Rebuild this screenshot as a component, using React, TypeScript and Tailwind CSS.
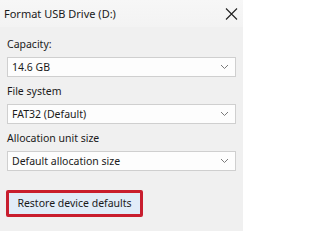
function Chevron() {
    return (
        <svg width="9" height="6" viewBox="0 0 9 6" className="shrink-0">
            <path d="M1 1 L4.5 4.5 L8 1" fill="none" stroke="#7a7a7a" strokeWidth="1" />
        </svg>
    )
}

function Select({ value }: { value: string }) {
    return (
        <div className="flex items-center justify-between h-[20px] border border-[#cfcfcf] bg-[#fdfdfd] pl-[4px] pr-[6px]">
            <span className="text-[10.5px] leading-[15px] text-[#1a1a1a]">{value}</span>
            <Chevron />
        </div>
    )
}

function Field({ label, value }: { label: string; value: string }) {
    return (
        <div className="flex flex-col gap-[5px]">
            <span className="text-[10.5px] leading-[15px] text-[#1a1a1a]">{label}</span>
            <Select value={value} />
        </div>
    )
}

export default function App() {
    return (
        <div className="w-[243px] h-[231px] bg-[#f0f0f0] flex flex-col overflow-hidden font-['Noto_Sans',sans-serif]">
            {/* Title bar */}
            <div className="h-[27px] shrink-0 flex items-center justify-between pl-[4px] pr-[5px] bg-gradient-to-b from-[#f7f7f7] to-[#f3f3f3]">
                <span className="text-[11px] leading-[16px] text-[#1a1a1a]">Format USB Drive (D:)</span>
                <svg width="13" height="12" viewBox="0 0 13 12">
                    <path d="M1 0.5 L12 11.5 M12 0.5 L1 11.5" stroke="#222" strokeWidth="1.1" fill="none" />
                </svg>
            </div>

            {/* Body */}
            <div className="flex flex-col px-[7px] pt-[10px] gap-[7px]">
                <Field label="Capacity:" value="14.6 GB" />
                <Field label="File system" value="FAT32 (Default)" />
                <Field label="Allocation unit size" value="Default allocation size" />
            </div>

            <div className="pl-[6px] pt-[19px]">
                <button className="w-[137px] h-[27px] border-[3px] border-[#c81e2e] rounded-[2px] bg-[#e1ecf8] flex items-center justify-center text-[10.5px] leading-[15px] text-[#1a1a1a]">
                    Restore device defaults
                </button>
            </div>
        </div>
    )
}
